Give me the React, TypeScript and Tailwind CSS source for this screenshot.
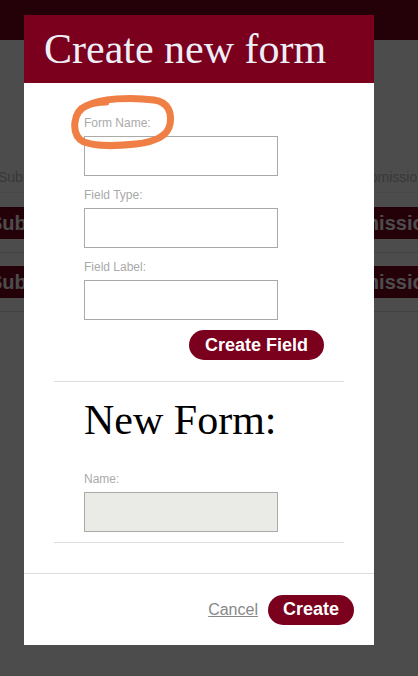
import React from "react";

const sans = { fontFamily: '"Liberation Sans", Arial, sans-serif' };
const serif = { fontFamily: '"Liberation Serif", "Times New Roman", serif' };

function Field({ label, muted }: { label: string; muted?: boolean }) {
  return (
    <div className="flex flex-col">
      <label className="text-[12px] leading-[14px] text-[#aaa]">{label}</label>
      <input
        className={`mt-[6px] h-[40px] w-[194px] border border-[#aaa] outline-none ${muted ? "bg-[#eaeae6]" : "bg-white"}`}
      />
    </div>
  );
}

function BackgroundPage() {
  return (
    <div className="flex flex-col" style={sans}>
      <div className="h-[40px] bg-[#7a001e]" />
      <div className="h-[123px]" />
      <div className="flex h-[30px] items-center justify-between border-b border-[#eee] text-[14px] text-[#bbb]">
        <span className="-ml-[2px]">Submissions</span>
        <span className="-mr-[14px]">Submissions</span>
      </div>
      <div className="h-[14px]" />
      {[0, 1].map((i) => (
        <div key={i} className="flex flex-col">
          <div className="flex h-[32px] items-center justify-between bg-[#7a001e] text-[20px] font-bold text-white">
            <span className="-ml-[11px]">Submissions</span>
            <span className="-mr-[30px]">Submissions</span>
          </div>
          <div className="h-[14px] border-b border-[#ddd]" />
          <div className="h-[13px]" />
        </div>
      ))}
    </div>
  );
}

export default function App() {
  return (
    <div className="relative h-[676px] w-full overflow-hidden bg-white">
      <BackgroundPage />
      <div className="absolute inset-0 bg-black/70" />

      {/* modal */}
      <div className="absolute left-[24px] top-[15px] flex w-[350px] flex-col bg-white" style={sans}>
        <div className="flex h-[68px] items-center bg-[#7a001e] pl-[20px]">
          <h1 className="text-[42px] leading-none text-[#eeeef6]" style={serif}>
            Create new form
          </h1>
        </div>

        <div className="px-[30px]">
          <div className="relative flex flex-col gap-[12px] pt-[33px] pl-[30px]">
            <Field label="Form Name:" />
            <Field label="Field Type:" />
            <Field label="Field Label:" />
            {/* hand drawn highlight */}
            <svg
              className="pointer-events-none absolute left-[16px] top-[11px]"
              width="106"
              height="58"
              viewBox="0 0 106 58"
              fill="none"
            >
              <path
                d="M16 12 C30 4 62 3 84 6 C98 8 102 18 100 30 C98 42 84 48 66 50 C46 52 28 53 14 48 C6 44 4 36 5 28 C6 20 9 15 16 12 C22 9 30 8 36 8"
                stroke="#ef7f45"
                strokeWidth="7"
                strokeLinecap="round"
                strokeLinejoin="round"
              />
            </svg>
          </div>
          <div className="flex justify-end pt-[10px] pr-[20px]">
            <button className="h-[30px] rounded-full bg-[#7a001e] px-[16px] text-[18px] font-bold text-white">
              Create Field
            </button>
          </div>
          <div className="mt-[21px] border-t border-[#ddd]" />
          <div className="pl-[30px] pt-[14px]">
            <h2 className="text-[42px] leading-[48px] text-black" style={serif}>
              New Form:
            </h2>
            <div className="pt-[28px]">
              <Field label="Name:" muted />
            </div>
          </div>
          <div className="mt-[10px] border-t border-[#ddd]" />
        </div>

        <div className="mt-[30px] flex h-[72px] items-center justify-end gap-[10px] border-t border-[#ddd] pr-[20px]">
          <a href="#" className="text-[16px] text-[#888] underline">
            Cancel
          </a>
          <button className="h-[30px] rounded-full bg-[#7a001e] px-[15px] text-[18px] font-bold text-white">
            Create
          </button>
        </div>
      </div>
    </div>
  );
}
